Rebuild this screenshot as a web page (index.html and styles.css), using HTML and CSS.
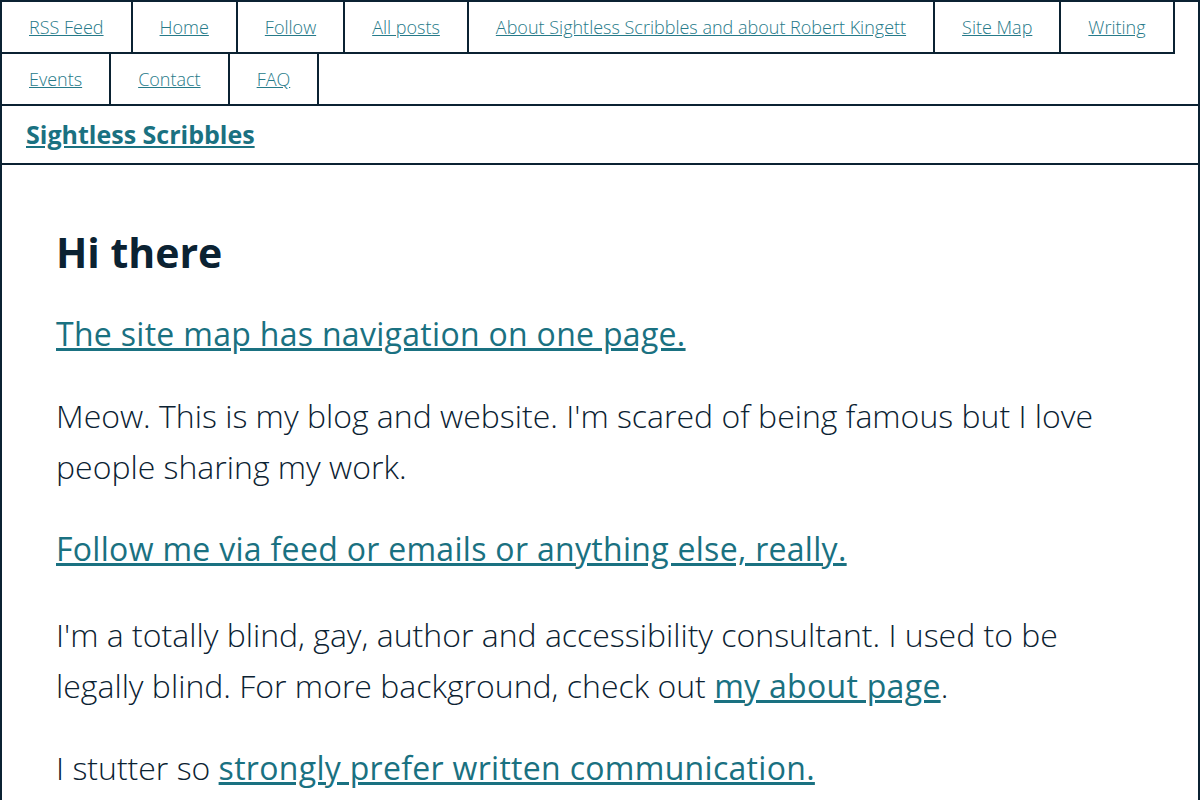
FILE: index.html
```html
<!DOCTYPE html>
<html lang="en">
<head>
<meta charset="utf-8">
<title>Sightless Scribbles</title>
<link rel="stylesheet" href="styles.css">
</head>
<body>
<div class="page">
	<nav class="site-nav">
		<ul>
			<li><a href="#">RSS Feed</a></li>
			<li><a href="#">Home</a></li>
			<li><a href="#">Follow</a></li>
			<li><a href="#">All posts</a></li>
			<li><a href="#">About Sightless Scribbles and about Robert Kingett</a></li>
			<li><a href="#">Site Map</a></li>
			<li><a href="#">Writing</a></li>
			<li><a href="#">Events</a></li>
			<li><a href="#">Contact</a></li>
			<li><a href="#">FAQ</a></li>
		</ul>
	</nav>
	<header class="site-header">
		<a href="#" class="site-title">Sightless Scribbles</a>
	</header>
	<main class="content">
		<h1>Hi there</h1>
		<p><a href="#">The site map has navigation on one page.</a></p>
		<p>Meow. This is my blog and website. I'm scared of being famous but I love people sharing my work.</p>
		<p class="follow"><a href="#">Follow me via feed or emails or anything else, really.</a></p>
		<p>I'm a totally blind, gay, author and accessibility consultant. I used to be legally blind. For more background, check out <a href="#">my about page</a>.</p>
		<p>I stutter so <a href="#">strongly prefer written communication.</a></p>
		<p>If you want to get in touch, the <a href="#">contact page</a> has everything you need.</p>
	</main>
</div>
</body>
</html>
```

FILE: styles.css
```css
body {
	margin: 0;
	background: #fff;
	color: #0b2232;
	font-family: "Open Sans", "DejaVu Sans", sans-serif;
	font-size: 18px;
	font-weight: 300;
}

a { color: #1a7181; }

.page {
	border: 2px solid #0b2232;
	min-height: 100vh;
}

/* nav tabs */
.site-nav ul {
	list-style: none;
	margin: 0 0 -2px 0;
	padding: 0;
	display: flex;
	flex-wrap: wrap;
}
.site-nav li {
	border-right: 2px solid #0b2232;
	border-bottom: 2px solid #0b2232;
	padding: 12px 27px;
	line-height: 26px;
}
.site-nav a { color: #267a89; }

.site-header {
	border-top: 2px solid #0b2232;
	border-bottom: 2px solid #0b2232;
	padding: 11px 24px 12px;
}
.site-title {
	font-size: 25px;
	font-weight: 700;
	line-height: 34px;
}

.content {
	padding: 40px 54px;
	font-size: 32px;
	line-height: 51px;
}
.content h1 {
	font-size: 41px;
	font-weight: 700;
	line-height: 50px;
	margin: 22px 0 20px;
}
.content p { margin: 31px 0; }
.content p.follow { margin-bottom: 35px; }
.content a {
	font-weight: 500;
	letter-spacing: 0.3px;
}
```
